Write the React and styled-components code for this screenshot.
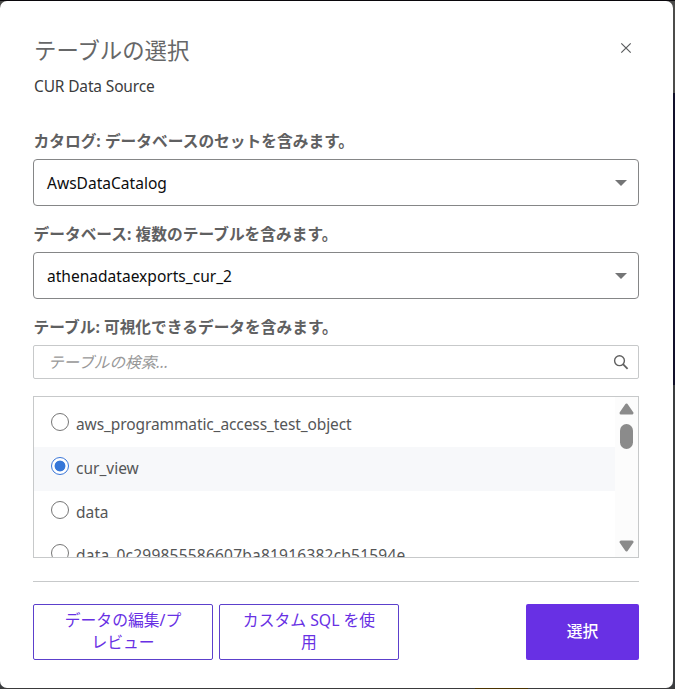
import React, { useState } from 'react';
import styled, { createGlobalStyle } from 'styled-components';

const PURPLE = '#6830e4';
const OUTLINE = '#5c40cc';
const GREY_TEXT = '#5f6061';
const LIGHT_BORDER = '#c7c9ca';

const TABLES = [
  { name: 'aws_programmatic_access_test_object', tracking: -0.1 },
  { name: 'cur_view', tracking: 0 },
  { name: 'data', tracking: 0 },
  { name: 'data_0c299855586607ba81916382cb51594e', tracking: 0.22 },
];

const SelectField = ({ label, value }) => (
  <>
    <Label>{label}</Label>
    <Select type="button">
      <SelectValue>{value}</SelectValue>
      <Caret viewBox="0 0 12 6">
        <path d="M0 0h12L6 6z" />
      </Caret>
    </Select>
  </>
);

const App = () => {
  const [selected, setSelected] = useState('cur_view');

  return (
    <>
      <GlobalStyle />
      <Backdrop>
        <Dialog role="dialog">
          <Header>
            <Title>テーブルの選択</Title>
            <CloseButton type="button" aria-label="閉じる">
              <svg width="12" height="12" viewBox="0 0 12 12">
                <path d="M1.3 1.3l9.4 9.4M10.7 1.3l-9.4 9.4" stroke="#5a5c5e" strokeWidth="1.2" />
              </svg>
            </CloseButton>
          </Header>
          <Subtitle>CUR Data Source</Subtitle>

          <SelectField label="カタログ: データベースのセットを含みます。" value="AwsDataCatalog" />
          <SelectField label="データベース: 複数のテーブルを含みます。" value="athenadataexports_cur_2" />

          <Label>テーブル: 可視化できるデータを含みます。</Label>
          <SearchBox>
            <SearchInput placeholder="テーブルの検索..." />
            <svg width="16" height="16" viewBox="0 0 16 16" fill="none" stroke="#606060">
              <circle cx="6.5" cy="6.7" r="4.9" strokeWidth="1.4" />
              <path d="M10 10.2l4.6 4.6" strokeWidth="1.8" />
            </svg>
          </SearchBox>

          <ListBox>
            <List>
              {TABLES.map(({ name, tracking }) => (
                <Row key={name} $selected={name === selected} onClick={() => setSelected(name)}>
                  <Radio $selected={name === selected} />
                  <RowName $tracking={tracking}>{name}</RowName>
                </Row>
              ))}
            </List>
            <Scrollbar>
              <svg width="15" height="12" viewBox="0 0 15 12">
                <Arrow d="M7.5 2L13 10H2z" />
              </svg>
              <Thumb />
              <svg width="15" height="12" viewBox="0 0 15 12">
                <Arrow d="M7.5 10L13 2H2z" />
              </svg>
            </Scrollbar>
          </ListBox>

          <Footer>
            <OutlineButton type="button">
              データの編集/プ
              <br />
              レビュー
            </OutlineButton>
            <OutlineButton type="button">
              カスタム SQL を使
              <br />用
            </OutlineButton>
            <PrimaryButton type="button">選択</PrimaryButton>
          </Footer>
        </Dialog>
      </Backdrop>
    </>
  );
};

const GlobalStyle = createGlobalStyle`
  * {
    box-sizing: border-box;
  }

  body {
    margin: 0;
    overflow: hidden;
    font-family: 'Noto Sans', 'Noto Sans CJK JP', sans-serif;
  }

  button,
  input {
    font-family: inherit;
  }

  svg {
    display: block;
    flex: none;
  }
`;

const Backdrop = styled.div`
  height: 689px;
  padding: 1px 2px 1px 0;
  background:
    linear-gradient(#09070b, #09070b) 0 0 / 100% 1px no-repeat,
    linear-gradient(90deg, #3a3a3b 475px, #4b3300 475px 528px, #3a3a3b 528px) 0 100% / 100% 1px no-repeat,
    linear-gradient(#4c4c4b 93px, #11102a 93px 385px, #3b3d40 385px);
`;

const Dialog = styled.div`
  display: flex;
  flex-direction: column;
  height: 687px;
  padding: 34px 34px 0 33px;
  border-radius: 7px;
  background: #fff;
`;

const Header = styled.div`
  display: flex;
  justify-content: space-between;
  height: 32px;
`;

const Title = styled.h1`
  margin: 0;
  padding-left: 1px;
  color: #666768;
  font-size: 22.4px;
  font-weight: 400;
  line-height: 32px;
`;

const CloseButton = styled.button`
  display: flex;
  justify-content: center;
  align-items: center;
  width: 26px;
  height: 26px;
  padding: 0;
  border: 0;
  background: none;
`;

const Subtitle = styled.div`
  height: 61px;
  padding: 7px 0 0 1px;
  color: #3b3c3d;
  font-size: 15.5px;
  letter-spacing: -0.15px;
  line-height: 24px;
`;

const Label = styled.div`
  height: 31px;
  padding-left: 0.5px;
  color: ${GREY_TEXT};
  font-size: 15.72px;
  font-weight: 700;
  line-height: 26px;
  white-space: nowrap;
`;

const Select = styled.button`
  display: flex;
  justify-content: space-between;
  align-items: center;
  height: 47px;
  margin-bottom: 15px;
  padding: 0 11px 0 13px;
  border: 1px solid #858687;
  border-radius: 4px;
  background: #fff;
`;

const SelectValue = styled.span`
  color: #0c0c0d;
  font-size: 15.55px;
  line-height: 24px;
`;

const Caret = styled.svg`
  width: 12px;
  height: 6px;
  fill: #747576;
`;

const SearchBox = styled.div`
  display: flex;
  align-items: center;
  height: 34px;
  padding: 0 9px 0 14px;
  border: 1px solid ${LIGHT_BORDER};
  border-radius: 2px;
`;

const SearchInput = styled.input`
  flex: 1;
  padding: 0;
  border: 0;
  outline: 0;
  font-size: 15.6px;

  &::placeholder {
    color: #989898;
    font-style: italic;
  }
`;

const ListBox = styled.div`
  display: flex;
  height: 162px;
  margin-top: 17px;
  border: 1px solid ${LIGHT_BORDER};
  overflow: hidden;
`;

const List = styled.div`
  flex: 1;
  padding-top: 6px;
`;

const Row = styled.div`
  display: flex;
  height: 43.8px;
  padding: 10px 0 0 17px;
  background: ${({ $selected }) => ($selected ? '#f7f8fa' : 'transparent')};
`;

const Radio = styled.span`
  flex: none;
  width: 18px;
  height: 18px;
  border: 1px solid ${({ $selected }) => ($selected ? '#3a76d8' : '#767676')};
  border-radius: 50%;
  background: ${({ $selected }) =>
    $selected ? 'radial-gradient(circle, #3576d8 5px, #fff 5.8px)' : '#fff'};
`;

const RowName = styled.span`
  padding-left: 7px;
  color: #555657;
  font-size: 15.5px;
  letter-spacing: ${({ $tracking }) => $tracking}px;
  line-height: 23px;
`;

const Scrollbar = styled.div`
  display: flex;
  flex-direction: column;
  align-items: center;
  width: 23px;
  padding: 6px 0 5px;
  background: #fcfcfc;
`;

const Arrow = styled.path`
  fill: #8b8b8b;
  stroke: #8b8b8b;
  stroke-width: 3px;
  stroke-linejoin: round;
`;

const Thumb = styled.div`
  width: 13px;
  height: 25px;
  margin: 9px 0 auto;
  border-radius: 7px;
  background: #8b8b8b;
`;

const Footer = styled.div`
  display: flex;
  gap: 6px;
  margin-top: 23px;
  padding-top: 22px;
  border-top: 1px solid ${LIGHT_BORDER};
`;

const Button = styled.button`
  height: 56px;
  padding: 0 0 2px;
  border-radius: 2px;
  font-size: 15.8px;
  line-height: 22px;
`;

const OutlineButton = styled(Button)`
  width: 180px;
  border: 1px solid ${OUTLINE};
  background: #fff;
  color: ${PURPLE};
`;

const PrimaryButton = styled(Button)`
  width: 113px;
  margin-left: auto;
  border: 0;
  background: ${PURPLE};
  color: #fff;
  font-weight: 500;
`;

export default App;
